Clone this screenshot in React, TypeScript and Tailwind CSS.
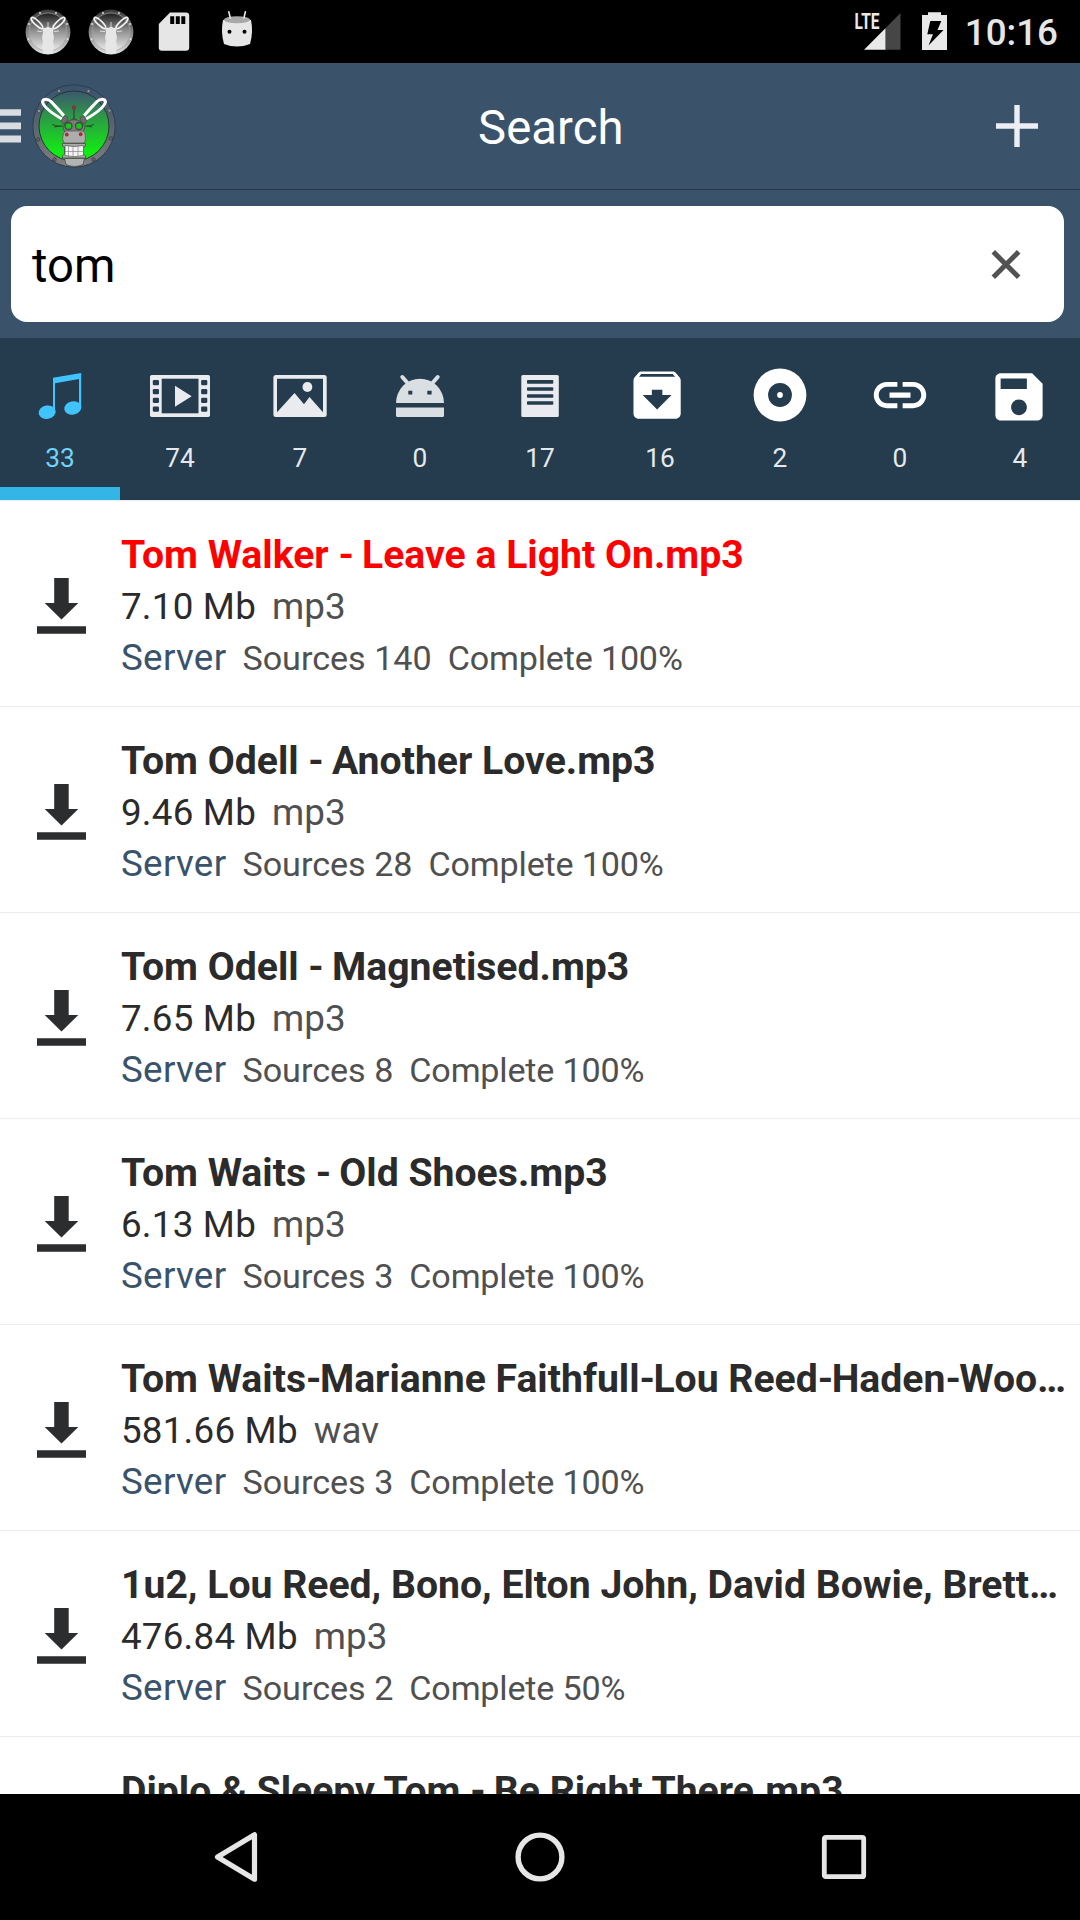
import React from 'react';

type Result = {
  title: string;
  size: string;
  ext: string;
  sources: number;
  complete: number;
  highlighted?: boolean;
};

const results: Result[] = [
  { title: 'Tom Walker - Leave a Light On.mp3', size: '7.10 Mb', ext: 'mp3', sources: 140, complete: 100, highlighted: true },
  { title: 'Tom Odell - Another Love.mp3', size: '9.46 Mb', ext: 'mp3', sources: 28, complete: 100 },
  { title: 'Tom Odell - Magnetised.mp3', size: '7.65 Mb', ext: 'mp3', sources: 8, complete: 100 },
  { title: 'Tom Waits - Old Shoes.mp3', size: '6.13 Mb', ext: 'mp3', sources: 3, complete: 100 },
  { title: 'Tom Waits-Marianne Faithfull-Lou Reed-Haden-Woo…', size: '581.66 Mb', ext: 'wav', sources: 3, complete: 100 },
  { title: '1u2, Lou Reed, Bono, Elton John, David Bowie, Brett…', size: '476.84 Mb', ext: 'mp3', sources: 2, complete: 50 },
  { title: 'Diplo & Sleepy Tom - Be Right There.mp3', size: '8.20 Mb', ext: 'mp3', sources: 2, complete: 100 },
];

function MuleStatusIcon({ id }: { id: string }) {
  return (
    <svg width="46" height="46" viewBox="-23 -23 46 46" className="shrink-0">
      <defs>
        <linearGradient id={id} x1="0" y1="0" x2="0" y2="1">
          <stop offset="0" stopColor="#1c1c1c" />
          <stop offset="0.45" stopColor="#8c8c8c" />
          <stop offset="1" stopColor="#ededed" />
        </linearGradient>
        <linearGradient id={id + 'r'} x1="0" y1="0" x2="0" y2="1">
          <stop offset="0" stopColor="#3a3a3a" />
          <stop offset="0.5" stopColor="#858585" />
          <stop offset="1" stopColor="#e0e0e0" />
        </linearGradient>
      </defs>
      <circle r="22.4" fill={`url(#${id}r)`} />
      <circle r="19" fill={`url(#${id})`} stroke="#a5a5a5" strokeWidth="0.7" />
      <g fill="#e6e6e6">
        <circle cx="-8" cy="-19" r="0.9" />
        <circle cx="8" cy="-19" r="0.9" />
        <circle cx="-19" cy="-8" r="0.9" />
        <circle cx="19" cy="-8" r="0.9" />
        <circle cx="-19.5" cy="7" r="0.9" />
        <circle cx="19.5" cy="7" r="0.9" />
      </g>
      <g fill="none" stroke="#f2f2f2" strokeWidth="1.6">
        <ellipse cx="-11" cy="-9" rx="7.8" ry="2.3" transform="rotate(43 -11 -9)" />
        <ellipse cx="11" cy="-9" rx="7.8" ry="2.3" transform="rotate(-43 11 -9)" />
        <path d="M0 -10v6M-11 -1l5 .6M11 -1l-5 .6" strokeWidth="0.8" />
      </g>
      <path d="M-6 -4L-3 -4Q0 -6 3 -4L6 -4L5 0L6 6L5 9L6 14L5 21Q0 23 -5 21L-6 14L-5 9L-6 6L-5 0Z" fill="#e6e6e6" />
    </svg>
  );
}

function MuleLogo() {
  return (
    <svg width="86" height="86" viewBox="-43 -43 86 86" className="shrink-0">
      <defs>
        <linearGradient id="mulebg" x1="0" y1="0" x2="0" y2="1">
          <stop offset="0" stopColor="#3c5670" />
          <stop offset="0.35" stopColor="#2f9549" />
          <stop offset="0.85" stopColor="#12e816" />
          <stop offset="1" stopColor="#0cf00c" />
        </linearGradient>
        <linearGradient id="mulering" x1="0" y1="0" x2="0" y2="1">
          <stop offset="0" stopColor="#38526b" />
          <stop offset="0.5" stopColor="#59656f" />
          <stop offset="1" stopColor="#808080" />
        </linearGradient>
      </defs>
      <circle r="41.2" fill="url(#mulering)" stroke="#2c3e4e" strokeWidth="1" />
      <circle r="35" fill="url(#mulebg)" stroke="#24382f" strokeWidth="1" />
      <g fill="#9a9a9a" stroke="#33414c" strokeWidth="0.6">
        <circle cx="-15" cy="-35" r="1.6" />
        <circle cx="14.5" cy="-35" r="1.6" />
        <circle cx="-35" cy="-15" r="1.6" />
        <circle cx="35.5" cy="-15.5" r="1.6" />
      </g>
      <g fill="#6a6a6a" stroke="#333" strokeWidth="0.8">
        <circle cx="-36" cy="13.5" r="1.7" />
        <circle cx="37" cy="12.5" r="1.7" />
        <circle cx="-19.5" cy="33.5" r="1.7" />
        <circle cx="19.5" cy="33.5" r="1.7" />
      </g>
      <g fill="none" stroke="#fff" strokeWidth="3" strokeLinejoin="round">
        <path d="M-12 -7C-19 -11 -30 -18 -31.500 -24C-31 -28 -26 -27.500 -23 -24.500C-18 -19 -13 -14 -10 -10" />
        <path d="M12 -7C19 -11 30 -18 31.500 -24C31 -28 26 -27.500 23 -24.500C18 -19 13 -14 10 -10" />
      </g>
      <path d="M-22 -1.500l6 1.500h5M-20 1l7 -1M20 -1.500l-5 1.500h-4M18 1l-5 -1" stroke="#1c4a24" strokeWidth="0.9" fill="none" />
      <path d="M0 -17v10" stroke="#333" strokeWidth="1" />
      <circle cx="0" cy="-18.500" r="1.700" fill="#b02c2c" stroke="#592a2a" strokeWidth="0.5" />
      <path d="M-2.500 -6q2.500 -3.500 5 0z" fill="#777" stroke="#333" strokeWidth="0.7" />
      <path d="M-13 -5l3.500 -5.500l3.500 2l-1 4l-4 2.500zM13 -5l-3.500 -5.500l-3.500 2l1 4l4 2.500z" fill="#6c6c6c" stroke="#444" strokeWidth="0.6" />
      <path d="M-8 -4Q0 -8.500 8 -4L11 1L9 7H-9L-11 1Z" fill="#7c7c7c" stroke="#444" strokeWidth="0.7" />
      <circle cx="-5.500" cy="0" r="3.500" fill="#17c81c" stroke="#444" strokeWidth="1.300" />
      <circle cx="5" cy="0" r="3.500" fill="#17c81c" stroke="#444" strokeWidth="1.300" />
      <path d="M-10.500 7Q-8 4 -5 5H5Q9 4 11 7L11.500 14L10 17H-10L-11.500 13Z" fill="#adadad" stroke="#555" strokeWidth="0.7" />
      <circle cx="-7.200" cy="8.600" r="1.600" fill="#c22626" stroke="#6b2020" strokeWidth="0.5" />
      <circle cx="6.700" cy="8.200" r="1.600" fill="#c22626" stroke="#6b2020" strokeWidth="0.5" />
      <path d="M-11.500 17.500H11.500V20L9.500 21V28L11.500 30V32H-11.500V30L-9.500 28V21L-11.500 20Z" fill="#aaa" stroke="#484848" strokeWidth="0.8" />
      <path d="M-9 19.500Q0 21.500 9.500 19.500V29.500Q0 32 -9 29.500Z" fill="#f3f3f3" stroke="#555" strokeWidth="0.7" />
      <path d="M-5.500 20v10.500M-1 20.500v10.500M4 20.500v10M-9 25.500H9.500" stroke="#777" strokeWidth="0.6" fill="none" />
      <path d="M-9.500 32.500H10.500L9 38.500Q0 42.500 -8 38.500Z" fill="#b3b3b3" stroke="#4a4a4a" strokeWidth="0.8" />
    </svg>
  );
}

function StatusBar() {
  return (
    <div className="flex h-[63px] shrink-0 items-center justify-between bg-black pl-[24.5px] pr-[22px]">
      <div className="flex items-center gap-[17px]">
        <MuleStatusIcon id="s1" />
        <MuleStatusIcon id="s2" />
        <svg width="126" height="63" viewBox="150.5 0 126 63">
          <path fillRule="evenodd" fill="#e6e6e6" d="M169.500 12.500H185.500Q188.700 12.500 188.700 15.700V47.500Q188.700 50.700 185.500 50.700H161.500Q158.300 50.700 158.300 47.500V24ZM169.700 16.300V24H173.700V16.300ZM175.300 16.300V24H179.300V16.300ZM180.800 16.300V24H184.800V16.300Z" />
          <path d="M222.500 20Q236.500 16 250.500 20Q253 32 249.500 44Q236.500 49 223.500 44Q220 32 222.500 20Z" fill="#e6e6e6" />
          <ellipse cx="236.500" cy="19.800" rx="13" ry="3.500" fill="#a8a8a8" />
          <path d="M228.300 11.800L229.800 18M244.900 11.800L243.400 18" stroke="#e6e6e6" strokeWidth="1.600" strokeLinecap="round" />
          <circle cx="229" cy="31.700" r="2" />
          <circle cx="244" cy="31.700" r="2" />
        </svg>
      </div>
      <div className="flex items-center">
        <svg width="100" height="63" viewBox="850 0 100 63" className="mr-[15px]">
          <path d="M864 49.700L885.700 28V49.700Z" fill="#e9e9e9" />
          <path d="M885.700 28L900.500 13V49.700H885.700Z" fill="#464646" />
          <text x="854.500" y="29.200" fontFamily="Roboto, sans-serif" fontWeight="700" fontSize="22" textLength="25" lengthAdjust="spacingAndGlyphs" fill="#e9e9e9">LTE</text>
          <path d="M928 12.200H941V15H947V50H922V15H928Z" fill="#e9e9e9" />
          <path d="M930.300 21H941.300L937.500 30H943.500L928.500 45.500L933 34.200H927.300Z" fill="#000" />
        </svg>
        <span className="pt-[2px] text-[36.750px] font-medium leading-[61px] text-[#e6e6e6]">10:16</span>
      </div>
    </div>
  );
}

function Header() {
  return (
    <header className="flex h-[127px] shrink-0 items-center border-b border-[#263747] bg-[#3a536a]">
      <div className="flex w-[478px] items-center gap-[10px]">
        <svg width="21" height="36" viewBox="0 108 21 36">
          <path d="M0 109.300H21V115.800H0ZM0 122.500H21V129.200H0ZM0 135.500H21V142.500H0Z" fill="#d9dde2" />
        </svg>
        <MuleLogo />
      </div>
      <h1 className="flex-1 pt-1 text-[47.250px] font-normal leading-[56px] tracking-[0.1px] text-white">Search</h1>
      <svg width="42" height="42" viewBox="0 0 42 42" className="mr-[42px]">
        <path d="M0 21H42M21 0V42" stroke="#eceef3" strokeWidth="5.400" />
      </svg>
    </header>
  );
}

function SearchField() {
  return (
    <div className="h-[148px] shrink-0 bg-[#3a536a] pb-4 pl-[11px] pr-4 pt-4">
      <div className="flex h-full items-center justify-between rounded-2xl bg-white pl-[21px] pr-[43px]">
        <span className="pt-1 text-[47.250px] leading-[56px] text-black">tom</span>
        <svg width="30" height="30" viewBox="0 -0.5 30 30">
          <path d="M2.300 2.300L27.700 27.700M27.700 2.300L2.300 27.700" stroke="#525252" strokeWidth="5" />
        </svg>
      </div>
    </div>
  );
}

const light = '#e9ebee';

const tabs: { count: number; icon: React.ReactNode }[] = [
  {
    count: 33,
    icon: (
      <g fill="#40c4ff">
        <path d="M53 377.700L81.200 373V408H79V379L55 383.200V412H53Z" />
        <ellipse cx="47.200" cy="412.200" rx="8.600" ry="6.700" transform="rotate(-10 47.200 412.200)" />
        <ellipse cx="72.800" cy="408" rx="8.600" ry="6.700" transform="rotate(-10 72.800 408)" />
      </g>
    ),
  },
  {
    count: 74,
    icon: (
      <g>
        <rect x="150" y="375" width="60" height="42" rx="1.800" fill={light} />
        <rect x="161.700" y="378.700" width="36.800" height="34.600" fill="#253b4e" />
        {[380, 389, 397.700, 406.500].map((y) => (
          <g key={y} fill="#253b4e">
            <rect x="152.800" y={y} width="6.200" height="5.300" rx="1.300" />
            <rect x="201.100" y={y} width="6.200" height="5.300" rx="1.300" />
          </g>
        ))}
        <path d="M175 385.700L191.700 396.300L175 406.800Z" fill={light} />
      </g>
    ),
  },
  {
    count: 7,
    icon: (
      <g>
        <rect x="273.400" y="375" width="53.300" height="42" rx="2.500" fill={light} />
        <path d="M277 378.700H323V412.200L309.500 397L304 404.200L294.500 393L277 412.200Z" fill="#253b4e" />
        <circle cx="307.400" cy="387" r="4.900" fill={light} />
      </g>
    ),
  },
  {
    count: 0,
    icon: (
      <g fill="#d9dfe2">
        <path d="M396 403A24 24.300 0 0 1 444 403Z" />
        <path d="M396 407.500H444V415.500Q444 417 442.500 417H397.500Q396 417 396 415.500Z" />
        <path d="M402.300 377L408 383.500M437.700 377L432 383.500" stroke="#d9dfe2" strokeWidth="4" strokeLinecap="round" />
        <path d="M408.300 390.700h4v3.800h-4zM427.300 390.700h4.300v3.800h-4.300z" fill="#253b4e" />
      </g>
    ),
  },
  {
    count: 17,
    icon: (
      <g>
        <rect x="521.300" y="375" width="37.500" height="42" rx="1.500" fill={light} />
        {[380.100, 387.200, 394.200, 401.200].map((y) => (
          <rect key={y} x="527" y={y} width="26.300" height="3.600" rx="0.800" fill="#253b4e" />
        ))}
      </g>
    ),
  },
  {
    count: 16,
    icon: (
      <path
        transform="translate(625.600 363.600) scale(2.625)"
        fill="#fff"
        d="M20.540 5.230l-1.390-1.680C18.880 3.210 18.470 3 18 3H6c-.47 0-.88.21-1.160.55L3.460 5.230C3.170 5.570 3 6.020 3 6.500V19c0 1.100.9 2 2 2h14c1.100 0 2-.9 2-2V6.500c0-.48-.17-.93-.46-1.270zM12 17.500L6.500 12H10v-2h4v2h3.500L12 17.500zM5.120 5l.81-1h12l.94 1H5.120z"
      />
    ),
  },
  {
    count: 2,
    icon: (
      <g>
        <circle cx="780" cy="395" r="26.400" fill="#fff" />
        <circle cx="780" cy="395" r="11.900" fill="#253b4e" />
        <circle cx="780" cy="395" r="2.900" fill="#fff" />
      </g>
    ),
  },
  {
    count: 0,
    icon: (
      <path
        transform="translate(868.500 363.500) scale(2.625)"
        fill="#fff"
        d="M3.900 12c0-1.710 1.390-3.100 3.100-3.100h4V7H7c-2.760 0-5 2.240-5 5s2.240 5 5 5h4v-1.900H7c-1.710 0-3.100-1.390-3.100-3.100zM8 13h8v-2H8v2zm9-6h-4v1.900h4c1.710 0 3.100 1.390 3.100 3.100s-1.390 3.100-3.100 3.100h-4V17h4c2.760 0 5-2.240 5-5s-2.240-5-5-5z"
      />
    ),
  },
  {
    count: 4,
    icon: (
      <path
        transform="translate(987.500 365.300) scale(2.625)"
        fill="#fff"
        d="M17 3H5c-1.110 0-2 .9-2 2v14c0 1.100.89 2 2 2h14c1.100 0 2-.9 2-2V7l-4-4zm-5 16c-1.660 0-3-1.340-3-3s1.340-3 3-3 3 1.340 3 3-1.340 3-3 3zm3-10H5V5h10v4z"
      />
    ),
  },
];

function Tabs() {
  return (
    <nav className="grid h-[162px] shrink-0 grid-cols-9 bg-[#253b4e]">
      {tabs.map((tab, i) => (
        <div
          key={i}
          className={
            i === 0
              ? 'flex flex-col items-center border-b-[13px] border-[#33b5e5] text-[#72d3f8]'
              : 'flex flex-col items-center border-b-[13px] border-transparent text-[#e6e9ec]'
          }
        >
          <svg width="120" height="100" viewBox={`${i * 120} 338 120 100`}>
            {tab.icon}
          </svg>
          <span className="text-[26.250px] leading-10">{tab.count}</span>
        </div>
      ))}
    </nav>
  );
}

/* Hyphens are set slightly tighter than the rest of a title. */
function Title({ text }: { text: string }) {
  const parts = text.split('-');
  return (
    <>
      {parts.map((part, i) => (
        <React.Fragment key={i}>
          {i > 0 && <span className="tracking-[-1.6px]">-</span>}
          {part}
        </React.Fragment>
      ))}
    </>
  );
}

function Row({ r }: { r: Result }) {
  return (
    <li className="flex h-[206px] shrink-0 border-t border-[#e9edf1]">
      <svg width="121" height="205" viewBox="0 1 121 205" className="shrink-0">
        <path d="M54.200 78H68.700V103H78.300L61.500 119.500L44.700 103H54.200ZM37 126.200H86V133.700H37Z" fill="#2b2d2f" />
      </svg>
      <div className="flex-1 pt-7">
        <h2
          className={
            r.highlighted
              ? 'whitespace-nowrap text-[39.160px] font-bold leading-[52px] text-[#ff0000]'
              : 'whitespace-nowrap text-[39.160px] font-bold leading-[52px] text-[#2b2b2b]'
          }
        >
          <Title text={r.title} />
        </h2>
        <div className="flex items-baseline gap-4 text-[36.750px] leading-[51px]">
          <span className="tracking-[0.22px] text-[#2b2b2b]">{r.size}</span>
          <span className="tracking-[0.1px] text-[#505050]">{r.ext}</span>
        </div>
        <div className="flex items-baseline gap-4 text-[36.750px] leading-[51px] text-[#505050]">
          <span className="tracking-[0.3px] text-[#3a536a]">Server</span>
          <span className="text-[34.125px]">Sources {r.sources}</span>
          <span className="text-[34.125px] tracking-[-0.18px]">Complete {r.complete}%</span>
        </div>
      </div>
    </li>
  );
}

function NavBar() {
  return (
    <div className="flex h-[126px] shrink-0 items-center justify-between bg-black pl-[213px] pr-[213px]">
      <svg width="46" height="54" viewBox="213 1830 46 54">
        <path d="M217.500 1857L254.500 1834.800V1879.200Z" fill="none" stroke="#e6e6e6" strokeWidth="5.200" strokeLinejoin="round" />
      </svg>
      <svg width="54" height="54" viewBox="0 0 54 54">
        <circle cx="27" cy="27" r="21.900" fill="none" stroke="#e6e6e6" strokeWidth="5.400" />
      </svg>
      <svg width="46" height="46" viewBox="0 0 46 46">
        <rect x="3.300" y="3.300" width="39.400" height="39.400" rx="1.500" fill="none" stroke="#e6e6e6" strokeWidth="4.800" />
      </svg>
    </div>
  );
}

export default function App() {
  return (
    <div className="flex h-[1920px] w-[1080px] flex-col overflow-hidden bg-white font-['Roboto',sans-serif]">
      <StatusBar />
      <Header />
      <SearchField />
      <Tabs />
      <ul className="flex min-h-0 flex-1 flex-col overflow-hidden">
        {results.map((r) => (
          <Row key={r.title} r={r} />
        ))}
      </ul>
      <NavBar />
    </div>
  );
}
